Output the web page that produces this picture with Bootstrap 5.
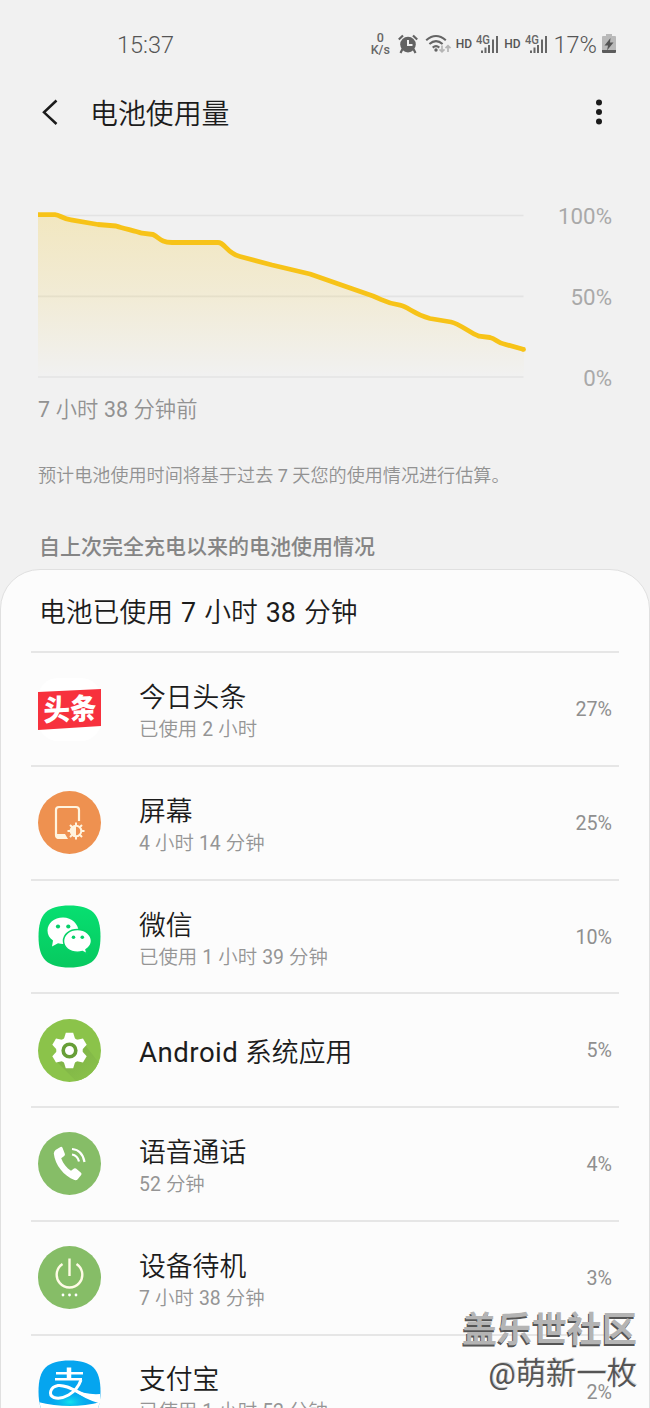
<!DOCTYPE html>
<html lang="zh-CN">
<head>
<meta charset="utf-8">
<meta name="viewport" content="width=device-width, initial-scale=1">
<title>电池使用量</title>
<link href="https://cdn.jsdelivr.net/npm/bootstrap@5.3.0/dist/css/bootstrap.min.css" rel="stylesheet">
<style>
  html, body { height: 1408px; overflow: hidden; }
  body { background: #f1f1f1; font-family: Roboto, "Noto Sans CJK SC DemiLight", "Noto Sans CJK SC", sans-serif; color: #1c1c1c; line-height: 1; }
  svg { display: block; flex: none; }
  .screen { width: 650px; height: 1408px; }
  .status { height: 88px; padding: 0 34px 0 117px; color: #555; }
  .clock { font-size: 23.5px; font-weight: 300; padding-top: 3px; }
  .speed { font-size: 12.5px; line-height: 12.5px; font-weight: 500; color: #666; width: 21px; }
  .hd { font-size: 12px; font-weight: 500; }
  .pct { font-size: 23.5px; font-weight: 300; padding-top: 3px; }
  .topbar { height: 50px; padding: 0 40px; }
  .topbar h1 { font-size: 27.9px; margin-left: 30px; font-weight: 400; padding-top: 3px; }
  .chart-area { padding: 67px 38px 0; height: 252px; }
  .axis { font-size: 22.3px; color: #a9a9a9; height: 184px; font-weight: 400; }
  .since { font-size: 21.3px; word-spacing: .4px; height: 38px; padding: 1px 0 0 38px; color: #929292; }
  .note { font-size: 18.1px; height: 94px; padding: 2px 0 0 38px; color: #929292; }
  .section-title { font-family: Roboto, "Noto Sans CJK SC", sans-serif; font-size: 21px; height: 47px; padding: 5px 0 0 39px; color: #858585; font-weight: 500; }
  .panel { height: 900px; background: #fcfcfc; border: 1px solid #e0e0e0; border-radius: 40px 40px 0 0; }
  .panel-head { height: 83.4px; padding: 5px 0 0 8px; font-size: 26.8px; word-spacing: 1.4px; border-bottom: 2px solid #e6e6e6; }
  .panel-body { padding: 0 30px; }
  .app-row { height: 113.7px; padding: 0 7px 0 7px; border-bottom: 2px solid #e6e6e6; }
  .app-text { margin-left: 38px; padding-top: 6px; }
  .app-name { font-size: 26.8px; line-height: 36px; }
  .latin { font-size: 27.6px; letter-spacing: .5px; }
  .app-time { font-size: 19.4px; line-height: 28px; word-spacing: .3px; color: #959595; }
  .app-share { font-size: 19.7px; color: #8f8f8f; padding-top: 2px; }
  .watermark { right: 13px; top: 1305px; text-align: right; }
  .wm-a { font-family: "Noto Sans CJK SC", sans-serif; font-size: 35px; line-height: 44px; font-weight: 700; color: #b4b4b4; text-shadow: -1px 2px 0 #555; }
  .wm-b { font-size: 30.400px; line-height: 50px; color: #555; text-shadow: 1px -1px 0 #d0d0d0; }
</style>
</head>
<body>
<main class="screen position-relative overflow-hidden">
  <header class="status d-flex align-items-center">
    <span class="clock">15:37</span>
    <div class="d-flex align-items-center ms-auto">
      <div class="speed text-center"><div>0</div><div>K/s</div></div>
      <svg style="margin-left:5px" width="24" height="24" viewBox="0 0 24 24"><circle cx="12" cy="12.600" r="7.800" fill="#626262"/><path d="M6.500 17 4.500 21M17.500 17 19.500 21M2.800 7.500 7 3.500M21.200 7.500 17 3.500" stroke="#626262" stroke-width="2.200"/><path d="M12 8v5h4.500" fill="none" stroke="#f1f1f1" stroke-width="2"/></svg>
      <svg style="margin-left:5px" width="27" height="24" viewBox="0 0 27 24" fill="none"><path d="M1.200 8.200q9.800-8.400 19.600 0M4.400 12q6.600-5.600 13.200 0M7.700 15.600q3.300-2.800 6.600 0" stroke="#646464" stroke-width="2.100"/><circle cx="11" cy="18" r="1.700" fill="#646464"/><path d="M17 13.500v6m-2.500-2.200 2.500 2.500 2.500-2.500M23 20v-6m-2.500 2.200 2.500-2.500 2.500 2.500" stroke="#b5b5b5" stroke-width="1.700"/></svg>
      <span class="hd" style="margin-left:4px">HD</span>
      <svg style="margin-left:4px" width="23" height="24" viewBox="0 0 23 24"><text x="0" y="11.500" font-size="12.500" font-weight="500" textLength="14" lengthAdjust="spacingAndGlyphs" fill="#666">4G</text><path d="M6 18.500v2.500M9.500 15.500v5.500M13 13v8M17 7.500v13.500M21 4v17" stroke="#666" stroke-width="2"/></svg>
      <span class="hd" style="margin-left:5px">HD</span>
      <svg style="margin-left:4px" width="23" height="24" viewBox="0 0 23 24"><text x="0" y="11.500" font-size="12.500" font-weight="500" textLength="14" lengthAdjust="spacingAndGlyphs" fill="#666">4G</text><path d="M6 18.500v2.500M9.500 15.500v5.500M13 13v8M17 7.500v13.500M21 4v17" stroke="#666" stroke-width="2"/></svg>
      <span class="pct" style="margin-left:6px">17%</span>
      <svg style="margin-left:5px" width="14" height="20" viewBox="0 0 14 20"><path d="M4 0h6v2h3q1 0 1 1v13H0V3q0-1 1-1h3z" fill="#b9b9b9"/><path d="M0 16h14v2q0 1-1 1H1q-1 0-1-1z" fill="#5c5c5c"/><path d="M8.500 4 2.500 11.500h3.500l-1 5 6.500-8H8z" fill="#555"/></svg>
    </div>
  </header>

  <nav class="topbar d-flex align-items-center">
    <svg width="20" height="28" viewBox="0 0 20 28" fill="none"><path d="M16.500 1.500 4 13.300 16.500 25" stroke="#1b1b1b" stroke-width="2.500"/></svg>
    <h1 class="mb-0">电池使用量</h1>
    <svg class="ms-auto" style="margin-right:7px" width="8" height="28" viewBox="0 0 8 28" fill="#1b1b1b"><circle cx="4" cy="3.500" r="3"/><circle cx="4" cy="13" r="3"/><circle cx="4" cy="22.500" r="3"/></svg>
  </nav>

  <section class="chart-area d-flex justify-content-between align-items-start">
    <svg width="490" height="180" viewBox="38 205 490 180" fill="none">
      <defs><linearGradient id="fade" x1="0" y1="0" x2="0" y2="1"><stop stop-color="#f4c82c" stop-opacity=".25"/><stop offset=".5" stop-color="#f4c82c" stop-opacity=".14"/><stop offset="1" stop-color="#f4c82c" stop-opacity="0"/></linearGradient></defs>
      <path d="M38 215.500H523.500M38 296.300H523.500M38 377H523.500" stroke="#e3e3e3" stroke-width="1.700"/>
      <path d="M38 215H55C60 215 63 219 71 219.800L98 224.500L116 226C122 228 135 231 142 233.200L153 234.500C160 238 160 242 172 242.500H218C225 242.500 226 253 240 256.500L272 265L310 274L340 284.500L373 296C385 301 386 303 400 305.200C409 307 413 314 430 318.500L451 322C460 324 470 333 479 336.200L490 337.500C496 339 498 343 504 344L524 349.500V371L523 377H38Z" fill="url(#fade)"/>
      <path d="M38 214.700H55C60 215 63 219 71 219.800L98 224.500L116 226C122 228 135 231 142 233.200L153 234.500C160 238 160 242 172 242.500H218C225 242.500 226 253 240 256.500L272 265L310 274L340 284.500L373 296C385 301 386 303 400 305.200C409 307 413 314 430 318.500L451 322C460 324 470 333 479 336.200L490 337.500C496 339 498 343 504 344L524 349.500" stroke="#f7c318" stroke-width="4.800" stroke-linejoin="round"/><circle cx="523.500" cy="349.400" r="2.400" fill="#f7c318"/>
    </svg>
    <div class="axis d-flex flex-column justify-content-between text-end"><span>100%</span><span>50%</span><span>0%</span></div>
  </section>
  <div class="since d-flex align-items-center">7 小时 38 分钟前</div>
  <div class="note d-flex align-items-center">预计电池使用时间将基于过去 7 天您的使用情况进行估算。</div>
  <h2 class="section-title d-flex align-items-center mb-0">自上次完全充电以来的电池使用情况</h2>

  <section class="panel">
    <div class="panel-body">
      <div class="panel-head d-flex align-items-center">电池已使用 7 小时 38 分钟</div>

      <div class="app-row d-flex align-items-center">
        <svg width="63" height="63" viewBox="0 0 63 63"><rect width="63" height="63" rx="20" fill="#fff"/><path d="M0 14 63 11V48L0 52z" fill="#f7313d"/><text transform="translate(5.500 43) skewY(-2.500) scale(1 1.080)" font-family="Noto Sans CJK SC, sans-serif" font-weight="900" font-size="27" textLength="53" lengthAdjust="spacingAndGlyphs" fill="#fff">头条</text></svg>
        <div class="app-text"><div class="app-name">今日头条</div><div class="app-time">已使用 2 小时</div></div>
        <span class="app-share ms-auto">27%</span>
      </div>

      <div class="app-row d-flex align-items-center">
        <svg width="63" height="63" viewBox="0 0 63 63" fill="none"><circle cx="31.500" cy="31.500" r="31.500" fill="#ee9150"/><path d="M41 30V19q0-3-3-3H21q-3 0-3 3v25q0 3 3 3h7" stroke="#fff4df" stroke-width="2.200"/><path d="M18 43h9l3 5H21q-3 0-3-3z" fill="#fff4df"/><g transform="translate(38 40)" stroke="#fff4df" stroke-width="2"><circle r="5.300"/><path d="M0-8.500V-5M0 5v3.500M-8.500 0H-5M5 0h3.500M-6-6l2.500 2.500M6-6 3.500-3.500M-6 6l2.500-2.500M6 6 3.500 3.500"/><path d="M0-5A5 5 0 0 0 0 5z" fill="#fff4df" stroke="none"/></g></svg>
        <div class="app-text"><div class="app-name">屏幕</div><div class="app-time">4 小时 14 分钟</div></div>
        <span class="app-share ms-auto">25%</span>
      </div>

      <div class="app-row d-flex align-items-center">
        <svg width="63" height="63" viewBox="0 0 63 63"><defs><linearGradient id="wx" x2="0" y2="1"><stop stop-color="#07df71"/><stop offset="1" stop-color="#07c95f"/></linearGradient></defs><path d="M31.500.5C54 .5 62.500 9 62.500 31.500S54 62.500 31.500 62.500.5 54 .5 31.500 9 .5 31.500.5z" fill="url(#wx)"/><path d="M25 12.500c-9 0-15.500 5.800-15.500 13 0 4.200 2 7.500 5.500 10L14 41.500l6-3.200q2.500.8 5 .8c9 0 15.500-5.500 15.500-12.600S34 12.500 25 12.500z" fill="#fff"/><path d="M39.500 24.500c-8 0-14 5-14 11.500S31.500 47.200 39.500 47.200q2.500 0 5-.7l4.500 2.500-1-4.300c3-2 5.500-5 5.500-8.700C53.500 29.500 47.500 24.500 39.500 24.500z" fill="#fff" stroke="#07d267" stroke-width="1.500"/><g fill="#07d069"><circle cx="20" cy="21.500" r="2.100"/><circle cx="30.300" cy="21.500" r="2.100"/><circle cx="35.500" cy="32.200" r="1.800"/><circle cx="44.300" cy="32.200" r="1.800"/></g></svg>
        <div class="app-text"><div class="app-name">微信</div><div class="app-time">已使用 1 小时 39 分钟</div></div>
        <span class="app-share ms-auto">10%</span>
      </div>

      <div class="app-row d-flex align-items-center">
        <svg width="63" height="63" viewBox="0 0 63 63"><defs><clipPath id="disc"><circle cx="31.500" cy="31.500" r="31.500"/></clipPath><linearGradient id="shade" x2="1" y2="1"><stop stop-color="#7bae46"/><stop offset=".9" stop-color="#8bc34a"/></linearGradient></defs><circle cx="31.500" cy="31.500" r="31.500" fill="#8bc34a"/><path d="M18 42 40 64 66 50 47 26z" fill="url(#shade)" clip-path="url(#disc)"/><g transform="translate(31.500 31.500)" fill="#fff"><circle r="13.200"/><path id="tooth" d="M-5.500-12 -3.700-17.700H3.700L5.500-12V12L3.700 17.700H-3.700L-5.500 12z"/><use href="#tooth" transform="rotate(60)"/><use href="#tooth" transform="rotate(120)"/><circle r="6.300" stroke="#689f38" stroke-width="3.600"/></g></svg>
        <div class="app-text"><div class="app-name"><span class="latin">Android</span> 系统应用</div></div>
        <span class="app-share ms-auto">5%</span>
      </div>

      <div class="app-row d-flex align-items-center">
        <svg width="63" height="63" viewBox="0 0 63 63" fill="none"><circle cx="31.500" cy="31.500" r="31.500" fill="#86bd67"/><path d="M17.500 18 22.500 15q1.300-.6 2 .7l2.400 6.300q.3 1.200-.7 2l-3 2.300c2 5.500 5.500 9.700 9.800 12.500l3-2.300q1-.6 2 .1l5 4.200q1 1 .2 2.200L39.500 47.500q-1 1-3 .6C26 44 17 33 15.800 21.500q0-2 1.700-3.500z" fill="#fff"/><path d="M34 22.500q5.500.8 7 7M34 17q10.500 1 12.500 13" stroke="#fff" stroke-width="2.200"/></svg>
        <div class="app-text"><div class="app-name">语音通话</div><div class="app-time">52 分钟</div></div>
        <span class="app-share ms-auto">4%</span>
      </div>

      <div class="app-row d-flex align-items-center">
        <svg width="63" height="63" viewBox="0 0 63 63" fill="none"><circle cx="31.500" cy="31.500" r="31.500" fill="#86bd67"/><path d="M31.500 12.500V30M24.500 18A12.800 12.800 0 1 0 38.500 18" stroke="#fffbe6" stroke-width="2.400"/><g fill="#fff"><circle cx="25" cy="49" r="1.400"/><circle cx="31.500" cy="49" r="1.400"/><circle cx="38" cy="49" r="1.400"/></g></svg>
        <div class="app-text"><div class="app-name">设备待机</div><div class="app-time">7 小时 38 分钟</div></div>
        <span class="app-share ms-auto">3%</span>
      </div>

      <div class="app-row d-flex align-items-center">
        <svg width="63" height="63" viewBox="0 0 63 63" fill="none"><defs><clipPath id="tile"><path d="M31.500.5C54 .5 62.500 9 62.500 31.500S54 62.500 31.500 62.500.5 54 .5 31.500 9 .5 31.500.5z"/></clipPath><radialGradient id="glow"><stop stop-color="#12e4ee"/><stop offset="1" stop-color="#05a5ef" stop-opacity="0"/></radialGradient></defs><g clip-path="url(#tile)"><path d="M0 0H63V63H0z" fill="#05a5ef"/><ellipse cx="32" cy="42" rx="23" ry="12" fill="url(#glow)"/><path d="M0 42Q32 50 63 42V63H0z" fill="#fff"/></g><path d="M18 13.300H45M17 19.300H44" stroke="#fff" stroke-width="2.600"/><path d="M31 7.500V20" stroke="#fff" stroke-width="4.500"/><path d="M43 20C38 34 24 40 16 37.500C10 35 12 27 20 25.500C31 24 43 36 62 41" stroke="#fff" stroke-width="3"/><path d="M33 29Q48 35 62 34V43.500Q48 40 33 29z" fill="#fff"/></svg>
        <div class="app-text"><div class="app-name">支付宝</div><div class="app-time">已使用 1 小时 52 分钟</div></div>
        <span class="app-share ms-auto">2%</span>
      </div>
    </div>
  </section>

  <div class="watermark position-absolute text-nowrap"><div class="wm-a">盖乐世社区</div><div class="wm-b">@萌新一枚</div></div>
</main>
<script src="https://cdn.jsdelivr.net/npm/bootstrap@5.3.0/dist/js/bootstrap.bundle.min.js"></script>
</body>
</html>
